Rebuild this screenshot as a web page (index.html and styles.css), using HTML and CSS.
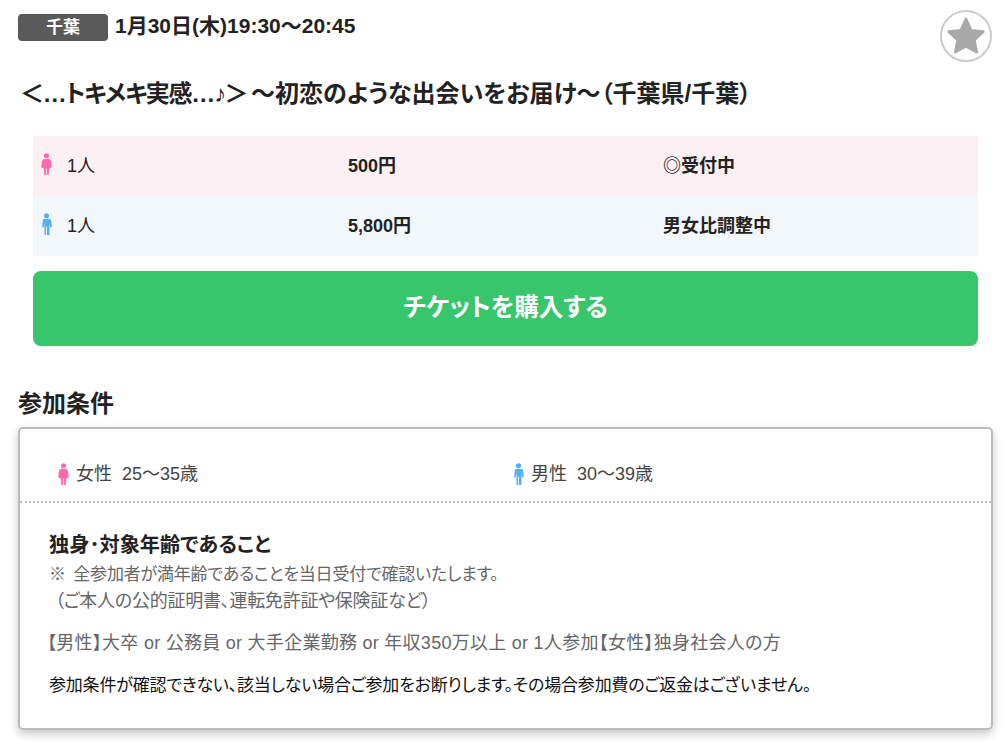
FILE: index.html
```html
<!DOCTYPE html>
<html lang="ja">
<head>
<meta charset="utf-8">
<title>チケット</title>
<link rel="stylesheet" href="styles.css">
</head>
<body>
<svg class="defs" width="0" height="0" aria-hidden="true">
  <symbol id="female" viewBox="0 0 12 24"><circle cx="6" cy="3" r="2.800"/><path d="M3.500 6.500h5c1.500 0 2 1 2.300 2.500l1 6c0 1-1 1.500-2.800 1.500L8.300 24H6.500v-7h-1v7H3.700L3 16.500c-1.800 0-2.800-.5-2.800-1.500l1-6C1.500 7.500 2 6.500 3.500 6.500z"/></symbol>
  <symbol id="male" viewBox="0 0 12 24"><circle cx="6" cy="3" r="2.800"/><path d="M3.200 6.500h5.600c1.300 0 2.200.8 2.300 2l.7 7h-1.800l-.8-5V24H6.500v-9h-1v9H3.800V10.500l-.8 5H1.200l.7-7c.1-1.200 .6-2 1.300-2z"/></symbol>
</svg>
<main class="page">
  <header class="head">
    <span class="area">千葉</span>
    <span class="date">1月30日(木)19:30～20:45</span>
    <button class="fav" aria-label="お気に入り">
      <svg viewBox="0 0 48 48" width="44" height="44"><path d="M24 5.500l5.600 12.300 13.200 1.500-9.800 9 2.700 13.200L24 35.200l-11.700 6.300L15 28.300l-9.800-9 13.200-1.500z" stroke-linejoin="round" stroke-width="3"/></svg>
    </button>
  </header>
  <h1 class="title"><span class="title-lead">＜…トキメキ実感…♪＞</span> ～初恋のような出会いをお届け～（千葉県/千葉）</h1>
  <section class="tickets">
    <div class="row row-f">
      <div class="cell"><svg class="icon pink"><use href="#female"/></svg><span class="num">1人</span></div>
      <div class="cell strong">500円</div>
      <div class="cell strong">◎受付中</div>
    </div>
    <div class="row row-m">
      <div class="cell"><svg class="icon blue"><use href="#male"/></svg><span class="num">1人</span></div>
      <div class="cell strong">5,800円</div>
      <div class="cell strong">男女比調整中</div>
    </div>
    <a class="buy">チケットを購入する</a>
  </section>
  <h2 class="heading">参加条件</h2>
  <section class="card">
    <div class="ages">
      <div class="age"><svg class="icon pink"><use href="#female"/></svg>女性&nbsp; 25～35歳</div>
      <div class="age"><svg class="icon blue"><use href="#male"/></svg>男性&nbsp; 30～39歳</div>
    </div>
    <div class="cond">
      <p class="cond-main">独身･対象年齢であること</p>
      <p class="note"><span class="note-first">※ 全参加者が満年齢であることを当日受付で確認いたします。</span><span class="note-second">（ご本人の公的証明書、運転免許証や保険証など）</span></p>
      <p class="extra">【男性】大卒 or 公務員 or 大手企業勤務 or 年収350万以上 or 1人参加【女性】独身社会人の方</p>
      <p class="warn">参加条件が確認できない、該当しない場合ご参加をお断りします。その場合参加費のご返金はございません。</p>
    </div>
  </section>
</main>
</body>
</html>
```

FILE: styles.css
```css
* { box-sizing: border-box; }
html, body { margin: 0; padding: 0; background: #fff; overflow: hidden; }
body {
  font-family: "Liberation Sans", "Noto Sans CJK JP", sans-serif;
  font-feature-settings: "palt";
  color: #222;
  height: 742px;
}
.defs { position: absolute; }
.page { padding: 10px 16px 0 18px; }
.head { display: flex; align-items: flex-start; height: 52px; }
.area {
  width: 90px; height: 27px; margin-top: 4px;
  background: #5a5a5a; color: #fff; border-radius: 4px;
  font-size: 17px; font-weight: 700; line-height: 27px; text-align: center;
}
.date { margin-left: 7px; font-size: 21px; font-weight: 700; line-height: 32px; color: #222; }
.fav {
  margin-left: auto; width: 52px; height: 52px; padding: 0;
  border: 2px solid #ccc; border-radius: 50%; background: #fff;
  display: flex; align-items: center; justify-content: center;
}
.fav svg { fill: #a9a9a9; stroke: #a9a9a9; }
.title { margin: 16px 0 0 2px; font-size: 24px; font-weight: 700; line-height: 32px; color: #222; white-space: nowrap; word-spacing: -3px; }
.title-lead { letter-spacing: -1.3px; }
.tickets { margin: 26px 0 0 15px; width: 945px; }
.row { display: grid; grid-template-columns: repeat(3, 315px); height: 60px; align-items: center; padding-bottom: 4px; }
.row-f { background: #fdf0f4; }
.row-m { background: #f1f7fb; }
.cell { display: flex; align-items: center; font-size: 18px; }
.cell:first-child { padding-left: 8px; }
.strong { font-weight: 700; }
.icon { width: 11px; height: 22px; flex: none; }
.pink { fill: #ff69ac; }
.blue { fill: #55aef2; }
.num { margin-left: 15px; }
.buy {
  display: block; height: 75px; margin-top: 15px;
  background: #38c66c; color: #fff; border-radius: 8px;
  font-size: 24.5px; font-weight: 700; line-height: 73px; text-align: center;
}
.heading { margin: 42px 0 0; font-size: 24px; font-weight: 700; line-height: 32px; color: #222; }
.card {
  margin-top: 7px; width: 975px; height: 303px;
  border: 2px solid #bbb; border-radius: 5px;
  box-shadow: 0 4px 10px rgba(0,0,0,.22);
}
.ages { display: grid; grid-template-columns: 455px 1fr; padding: 33px 0 0 38px; border-bottom: 2px dotted #bbb; height: 74px; }
.age { display: flex; align-items: center; gap: 7px; font-size: 18px; line-height: 24px; color: #444; height: 24px; }
.cond { padding: 26px 30px 0 29px; }
.cond p { margin: 0; }
.cond-main { font-size: 20.2px; font-weight: 700; line-height: 32px; color: #222; }
.note { font-size: 18px; line-height: 27px; color: #666; }
.note-first { display: block; font-size: 17px; letter-spacing: -.2px; word-spacing: 3px; }
.note-second { display: block; letter-spacing: -.25px; padding-left: 6px; }
.extra { margin: 15px 0 0 -2px !important; font-size: 18px; line-height: 27px; color: #666; letter-spacing: .27px; }
.warn { margin-top: 15px !important; font-size: 17px; line-height: 27px; color: #111; letter-spacing: -.2px; }
```
